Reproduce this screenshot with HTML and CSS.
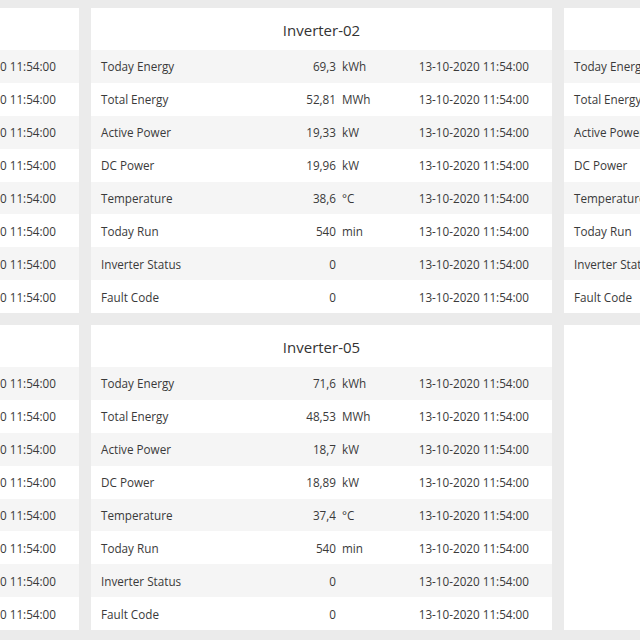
FILE: index.html
```html
<!DOCTYPE html>
<html>
<head>
<meta charset="utf-8">
<link rel="stylesheet" href="styles.css">
</head>
<body>
<div class="grid">
  <section class="card">
    <h2 class="card-title">Inverter-01</h2>
    <table class="metrics">
      <tr><td class="label">Today Energy</td><td class="value">70,2</td><td class="unit">kWh</td><td class="time">13-10-2020 11:54:00</td></tr>
      <tr><td class="label">Total Energy</td><td class="value">51,47</td><td class="unit">MWh</td><td class="time">13-10-2020 11:54:00</td></tr>
      <tr><td class="label">Active Power</td><td class="value">19,05</td><td class="unit">kW</td><td class="time">13-10-2020 11:54:00</td></tr>
      <tr><td class="label">DC Power</td><td class="value">19,62</td><td class="unit">kW</td><td class="time">13-10-2020 11:54:00</td></tr>
      <tr><td class="label">Temperature</td><td class="value">38,1</td><td class="unit">°C</td><td class="time">13-10-2020 11:54:00</td></tr>
      <tr><td class="label">Today Run</td><td class="value">540</td><td class="unit">min</td><td class="time">13-10-2020 11:54:00</td></tr>
      <tr><td class="label">Inverter Status</td><td class="value">0</td><td class="unit"></td><td class="time">13-10-2020 11:54:00</td></tr>
      <tr><td class="label">Fault Code</td><td class="value">0</td><td class="unit"></td><td class="time">13-10-2020 11:54:00</td></tr>
    </table>
  </section>
  <section class="card">
    <h2 class="card-title">Inverter-02</h2>
    <table class="metrics">
      <tr><td class="label">Today Energy</td><td class="value">69,3</td><td class="unit">kWh</td><td class="time">13-10-2020 11:54:00</td></tr>
      <tr><td class="label">Total Energy</td><td class="value">52,81</td><td class="unit">MWh</td><td class="time">13-10-2020 11:54:00</td></tr>
      <tr><td class="label">Active Power</td><td class="value">19,33</td><td class="unit">kW</td><td class="time">13-10-2020 11:54:00</td></tr>
      <tr><td class="label">DC Power</td><td class="value">19,96</td><td class="unit">kW</td><td class="time">13-10-2020 11:54:00</td></tr>
      <tr><td class="label">Temperature</td><td class="value">38,6</td><td class="unit">°C</td><td class="time">13-10-2020 11:54:00</td></tr>
      <tr><td class="label">Today Run</td><td class="value">540</td><td class="unit">min</td><td class="time">13-10-2020 11:54:00</td></tr>
      <tr><td class="label">Inverter Status</td><td class="value">0</td><td class="unit"></td><td class="time">13-10-2020 11:54:00</td></tr>
      <tr><td class="label">Fault Code</td><td class="value">0</td><td class="unit"></td><td class="time">13-10-2020 11:54:00</td></tr>
    </table>
  </section>
  <section class="card">
    <h2 class="card-title">Inverter-03</h2>
    <table class="metrics">
      <tr><td class="label">Today Energy</td><td class="value">68,9</td><td class="unit">kWh</td><td class="time">13-10-2020 11:54:00</td></tr>
      <tr><td class="label">Total Energy</td><td class="value">50,12</td><td class="unit">MWh</td><td class="time">13-10-2020 11:54:00</td></tr>
      <tr><td class="label">Active Power</td><td class="value">18,94</td><td class="unit">kW</td><td class="time">13-10-2020 11:54:00</td></tr>
      <tr><td class="label">DC Power</td><td class="value">19,51</td><td class="unit">kW</td><td class="time">13-10-2020 11:54:00</td></tr>
      <tr><td class="label">Temperature</td><td class="value">37,9</td><td class="unit">°C</td><td class="time">13-10-2020 11:54:00</td></tr>
      <tr><td class="label">Today Run</td><td class="value">540</td><td class="unit">min</td><td class="time">13-10-2020 11:54:00</td></tr>
      <tr><td class="label">Inverter Status</td><td class="value">0</td><td class="unit"></td><td class="time">13-10-2020 11:54:00</td></tr>
      <tr><td class="label">Fault Code</td><td class="value">0</td><td class="unit"></td><td class="time">13-10-2020 11:54:00</td></tr>
    </table>
  </section>
  <section class="card">
    <h2 class="card-title">Inverter-04</h2>
    <table class="metrics">
      <tr><td class="label">Today Energy</td><td class="value">70,8</td><td class="unit">kWh</td><td class="time">13-10-2020 11:54:00</td></tr>
      <tr><td class="label">Total Energy</td><td class="value">49,76</td><td class="unit">MWh</td><td class="time">13-10-2020 11:54:00</td></tr>
      <tr><td class="label">Active Power</td><td class="value">18,52</td><td class="unit">kW</td><td class="time">13-10-2020 11:54:00</td></tr>
      <tr><td class="label">DC Power</td><td class="value">19,08</td><td class="unit">kW</td><td class="time">13-10-2020 11:54:00</td></tr>
      <tr><td class="label">Temperature</td><td class="value">37,2</td><td class="unit">°C</td><td class="time">13-10-2020 11:54:00</td></tr>
      <tr><td class="label">Today Run</td><td class="value">540</td><td class="unit">min</td><td class="time">13-10-2020 11:54:00</td></tr>
      <tr><td class="label">Inverter Status</td><td class="value">0</td><td class="unit"></td><td class="time">13-10-2020 11:54:00</td></tr>
      <tr><td class="label">Fault Code</td><td class="value">0</td><td class="unit"></td><td class="time">13-10-2020 11:54:00</td></tr>
    </table>
  </section>
  <section class="card">
    <h2 class="card-title">Inverter-05</h2>
    <table class="metrics">
      <tr><td class="label">Today Energy</td><td class="value">71,6</td><td class="unit">kWh</td><td class="time">13-10-2020 11:54:00</td></tr>
      <tr><td class="label">Total Energy</td><td class="value">48,53</td><td class="unit">MWh</td><td class="time">13-10-2020 11:54:00</td></tr>
      <tr><td class="label">Active Power</td><td class="value">18,7</td><td class="unit">kW</td><td class="time">13-10-2020 11:54:00</td></tr>
      <tr><td class="label">DC Power</td><td class="value">18,89</td><td class="unit">kW</td><td class="time">13-10-2020 11:54:00</td></tr>
      <tr><td class="label">Temperature</td><td class="value">37,4</td><td class="unit">°C</td><td class="time">13-10-2020 11:54:00</td></tr>
      <tr><td class="label">Today Run</td><td class="value">540</td><td class="unit">min</td><td class="time">13-10-2020 11:54:00</td></tr>
      <tr><td class="label">Inverter Status</td><td class="value">0</td><td class="unit"></td><td class="time">13-10-2020 11:54:00</td></tr>
      <tr><td class="label">Fault Code</td><td class="value">0</td><td class="unit"></td><td class="time">13-10-2020 11:54:00</td></tr>
    </table>
  </section>
  <section class="card card-empty"></section>
</div>
</body>
</html>
```
FILE: styles.css
```css
html, body {
  margin: 0;
  padding: 0;
  background: #ebebeb;
  overflow: hidden;
}
body {
  font-family: "Open Sans", "Liberation Sans", sans-serif;
  color: #3a3a3a;
  width: 640px;
  height: 640px;
}
.grid {
  display: grid;
  grid-template-columns: repeat(3, 461px);
  grid-auto-rows: 305px;
  column-gap: 12px;
  row-gap: 12px;
  padding-top: 8px;
  margin-left: -382px;
}
.card {
  background: #ffffff;
  display: flex;
  flex-direction: column;
}
.card-title {
  margin: 0;
  height: 42px;
  line-height: 45px;
  text-align: center;
  font-size: 15px;
  font-weight: 400;
  color: #333333;
}
.metrics {
  width: 100%;
  border-collapse: collapse;
  table-layout: fixed;
  font-size: 11.7px;
}
.metrics tr {
  height: 32.875px;
}
.metrics tr:nth-child(odd) {
  background: #f5f5f5;
}
.metrics td {
  padding: 0;
  white-space: nowrap;
  overflow: hidden;
}
.label {
  width: 140px;
  padding-left: 10px !important;
}
.value {
  width: 95px;
  text-align: right;
}
.unit {
  width: 70px;
  padding-left: 6px !important;
}
.time {
  text-align: right;
  padding-right: 23px !important;
}
```
